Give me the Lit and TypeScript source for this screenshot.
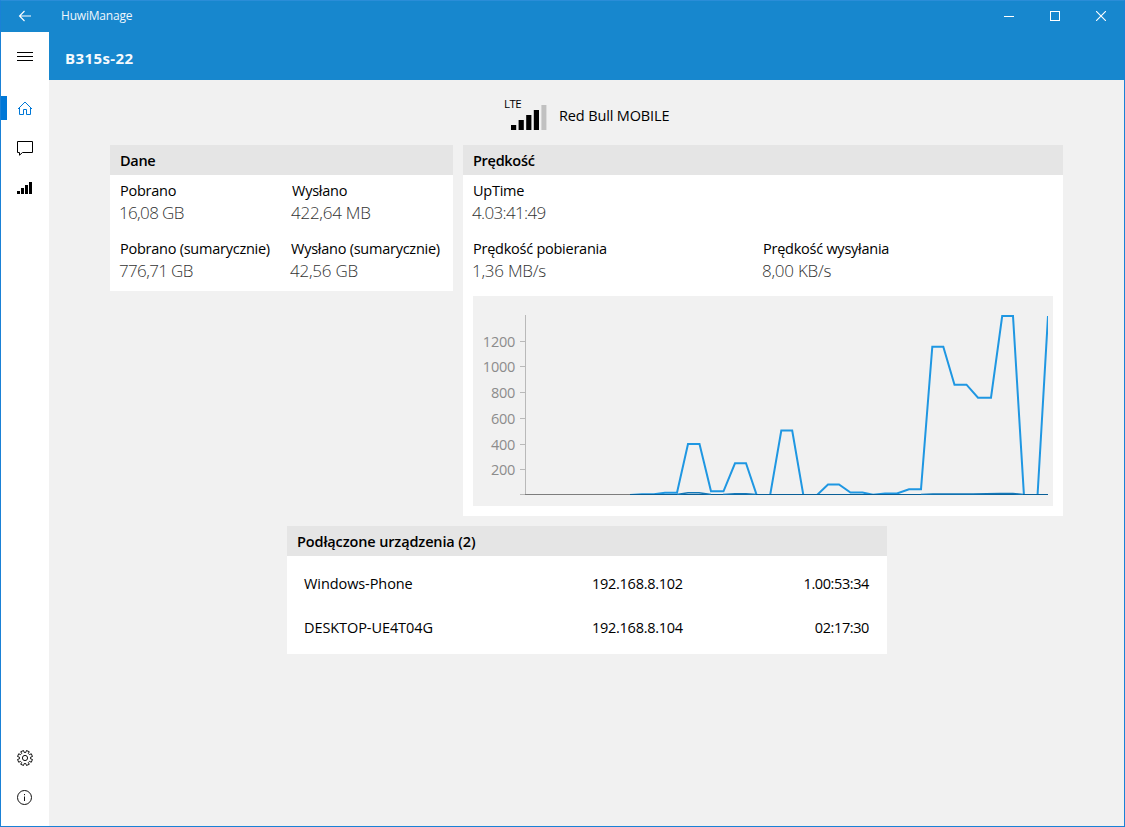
import { LitElement, html, css, svg } from "lit";
import { customElement, property } from "lit/decorators.js";

const bars = (heights: number[], step: number, width: number, base: number) =>
  heights.map((h, i) => svg`<rect x=${i * step} y=${base - h} width=${width} height=${h}></rect>`);

@customElement("speed-chart")
class SpeedChart extends LitElement {
  static styles = css`
    :host { display: block; height: 210px; background: #f1f1f1; }
    svg { display: block; }
    .label { font: 14.5px "Open Sans", sans-serif; letter-spacing: -0.2px; fill: #8c8c8c; text-anchor: end; }
    .axis { stroke: #b9b9b9; fill: none; }
    .base { stroke: #7d7d7d; fill: none; }
    .down { stroke: #1f97e2; stroke-width: 2; fill: none; }
    .up { stroke: #0a5f97; stroke-width: 1; fill: none; }
    .up-rise { stroke: #1478b8; stroke-width: 1.4; fill: none; }
  `;
  ticks: [string, number][] = [["1200", 45.5], ["1000", 70.5], ["800", 96.5], ["600", 122.5], ["400", 148.5], ["200", 173.5]];
  render() {
    return html`<svg width="580" height="210" viewBox="0 0 580 210">
      <defs><clipPath id="plot"><rect x="52" y="19" width="523" height="180"></rect></clipPath></defs>
      ${this.ticks.map(([t, y]) => svg`<text class="label" x="42.2" y=${y + 5}>${t}</text><path class="axis" d=${`M47 ${y}h5`}></path>`)}
      <path class="axis" d="M47 198.5h5M52.5 19v179.5"></path>
      <path class="base" d="M52 198.5h523"></path>
      <g clip-path="url(#plot)">
        <path class="down" d="M157 199L169 198.2H181L192 196.7H204L215 148H226.500L238 195.300H250.500L262 167.300H273L284 200H297L308.300 134.500H319.200L330.500 200H343L355 188.500H366L377.500 196.500H389.500L400 198.800L412 197.500H424L436 193.200H448L459.300 50.700H470.300L481.500 88.700H493.500L505 101.700H518L529.200 20H540L551 200H564.500L575 20"></path>
        <path class="up" d="M157 198.500H575"></path>
        <path class="up-rise" d="M204 198.500L215 196.800H226L238 198.500M250 198.500L262 197.700H273L283 198.500M448 198.500L460 198H500L527 197.500H540L550 198.500"></path>
      </g>
    </svg>`;
  }
}

@customElement("data-field")
class DataField extends LitElement {
  static styles = css`
    :host { display: block; height: 58px; white-space: nowrap; }
    .name { font-size: 14.5px; line-height: 20px; letter-spacing: -0.25px; color: #000; }
    .value { font-size: 17px; line-height: 23px; font-weight: 300; letter-spacing: -0.65px; color: #333; margin-left: -1px; }
    :host(.loose) .value { letter-spacing: -0.25px; }
    :host(.inset) { padding-left: 1px; }
  `;
  @property() name = "";
  @property() value = "";
  render() {
    return html`<div class="name">${this.name}</div><div class="value">${this.value}</div>`;
  }
}

@customElement("app-root")
class AppRoot extends LitElement {
  static styles = css`
    :host { display: block; font-family: "Open Sans", "Noto Sans", sans-serif; color: #000; }
    * { box-sizing: border-box; }
    svg { display: block; }
    .window { width: 1125px; height: 827px; border: 1px solid #1a81d6; border-top-color: #2a8dd8; display: flex; flex-direction: column; background: #f1f1f1; overflow: hidden; }
    .titlebar { height: 31px; flex: none; display: flex; align-items: center; padding-bottom: 1px; background: #1787ce; color: #fff; }
    .back { width: 48px; padding-left: 17px; }
    .title { flex: 1; padding-left: 12px; font-size: 12px; line-height: 30px; letter-spacing: -0.2px; color: #eef6fc; }
    .control { width: 46px; display: flex; justify-content: center; }
    .body { flex: 1; display: flex; min-height: 0; }
    .rail { width: 48px; flex: none; background: #fff; display: flex; flex-direction: column; }
    .item { height: 40px; flex: none; display: flex; align-items: center; padding-left: 16px; }
    .menu { height: 48px; padding-top: 1px; margin-bottom: 8px; }
    .active { padding-left: 0; gap: 10px; color: #0078d7; }
    .marker { width: 6px; height: 24px; background: #0078d7; }
    .spacer { flex: 1; }
    .last { margin-bottom: 8px; }
    .main { flex: 1; display: flex; flex-direction: column; align-items: center; }
    .header { width: 100%; height: 48px; flex: none; background: #1787ce; color: #f6fafd; font-weight: 700; font-size: 15px; line-height: 53px; padding-left: 16px; letter-spacing: 0.4px; }
    .operator { height: 65px; display: flex; padding-top: 17px; width: 165px; }
    .signal { width: 55px; flex: none; }
    .lte { font-size: 11.5px; line-height: 13px; height: 8px; letter-spacing: -0.6px; }
    .signal-bars { margin-left: 7px; }
    .carrier { font-size: 14.5px; line-height: 38px; white-space: nowrap; letter-spacing: -0.14px; }
    .cards { display: flex; gap: 10px; align-items: flex-start; margin-bottom: 10px; }
    .card { background: #fff; }
    .data { width: 343px; height: 146px; }
    .speed { width: 600px; height: 371px; }
    .devices { width: 600px; height: 128px; margin-left: 1px; }
    .heading { height: 30px; background: #e5e5e5; padding-left: 10px; font-size: 14.5px; font-weight: 600; line-height: 31px; letter-spacing: -0.13px; }
    .short { letter-spacing: -0.3px; }
    .fields { display: grid; padding: 6px 10px 0; }
    .data-fields { grid-template-columns: 171px 1fr; }
    .speed-fields { grid-template-columns: 290px 1fr; }
    .wide { grid-column: 1 / -1; }
    .chart { margin: -1px 10px 0; }
    .rows { padding: 5px 18px 0 17px; }
    .row { height: 44px; display: grid; grid-template-columns: 288px 1fr auto; align-items: center; font-size: 14.5px; }
    .host { letter-spacing: -0.08px; }
    .address { letter-spacing: -0.27px; }
    .duration { letter-spacing: -0.4px; }
  `;
  devices = [
    { host: "Windows-Phone", address: "192.168.8.102", duration: "1.00:53:34" },
    { host: "DESKTOP-UE4T04G", address: "192.168.8.104", duration: "02:17:30" },
  ];
  gear() {
    const pts: string[] = [];
    for (let i = 0; i < 8; i++) {
      const a = (i * Math.PI) / 4 + Math.PI / 8;
      for (const [r, d] of [[5.6, -0.25], [7.6, -0.2], [7.6, 0.2], [5.6, 0.25]]) {
        pts.push(`${(8 + r * Math.cos(a + d)).toFixed(2)},${(8 + r * Math.sin(a + d)).toFixed(2)}`);
      }
    }
    return html`<svg width="16" height="16" fill="none" stroke="#111"><polygon points=${pts.join(" ")} stroke-linejoin="round"></polygon><circle cx="8" cy="8" r="2.6"></circle></svg>`;
  }
  render() {
    return html`
      <div class="window">
        <div class="titlebar">
          <div class="back"><svg width="14" height="12" fill="none" stroke="#fff" stroke-width="1.1"><path d="M13 6H1.500M6.500 1L1.500 6L6.500 11"></path></svg></div>
          <div class="title">HuwiManage</div>
          <div class="control"><svg width="10" height="10"><path d="M0 5.500H10" stroke="#fff"></path></svg></div>
          <div class="control"><svg width="10" height="10"><rect x=".5" y=".5" width="9" height="9" fill="none" stroke="#fff"></rect></svg></div>
          <div class="control"><svg width="10" height="10"><path d="M0 0L10 10M10 0L0 10" stroke="#fff" stroke-width="1.1"></path></svg></div>
        </div>
        <div class="body">
          <nav class="rail">
            <div class="item menu"><svg width="16" height="9"><path d="M0 .5H16M0 4.500H16M0 8.500H16" stroke="#000"></path></svg></div>
            <div class="item active"><div class="marker"></div><svg width="16" height="16" fill="none" stroke="currentColor"><path d="M1 9L8 2L15 9M2.500 8V14.500H6.500V9.500H9.500V14.500H13.500V8"></path></svg></div>
            <div class="item"><svg width="16" height="16" fill="none" stroke="#000"><path d="M.5 1.500H15.500V12.500H5.500L2.500 15.200V12.500H.5Z"></path></svg></div>
            <div class="item"><svg width="16" height="12">${bars([3, 6, 9, 12], 4, 3, 12)}</svg></div>
            <div class="spacer"></div>
            <div class="item">${this.gear()}</div>
            <div class="item last"><svg width="16" height="16" fill="none" stroke="#111"><circle cx="7.500" cy="7.500" r="7"></circle><path d="M7.500 6.500V11M7.500 4V5.200"></path></svg></div>
          </nav>
          <main class="main">
            <div class="header">B315s-22</div>
            <div class="operator">
              <div class="signal">
                <div class="lte">LTE</div>
                <svg class="signal-bars" width="36" height="25">${bars([5, 10, 15, 20], 7.6, 5.2, 25)}<rect x="30.400" y="0" width="5" height="25" fill="#c1c1c1"></rect></svg>
              </div>
              <div class="carrier">Red Bull MOBILE</div>
            </div>
            <div class="cards">
              <section class="card data">
                <div class="heading short">Dane</div>
                <div class="fields data-fields">
                  <data-field name="Pobrano" value="16,08 GB"></data-field>
                  <data-field class="loose inset" name="Wysłano" value="422,64 MB"></data-field>
                  <data-field name="Pobrano (sumarycznie)" value="776,71 GB"></data-field>
                  <data-field class="loose" name="Wysłano (sumarycznie)" value="42,56 GB"></data-field>
                </div>
              </section>
              <section class="card speed">
                <div class="heading short">Prędkość</div>
                <div class="fields speed-fields">
                  <data-field class="wide" name="UpTime" value="4.03:41:49"></data-field>
                  <data-field class="loose" name="Prędkość pobierania" value="1,36 MB/s"></data-field>
                  <data-field class="loose" name="Prędkość wysyłania" value="8,00 KB/s"></data-field>
                </div>
                <speed-chart class="chart"></speed-chart>
              </section>
            </div>
            <section class="card devices">
              <div class="heading">Podłączone urządzenia (2)</div>
              <div class="rows">${this.devices.map((d) => html`<div class="row"><span class="host">${d.host}</span><span class="address">${d.address}</span><span class="duration">${d.duration}</span></div>`)}</div>
            </section>
          </main>
        </div>
      </div>`;
  }
}
